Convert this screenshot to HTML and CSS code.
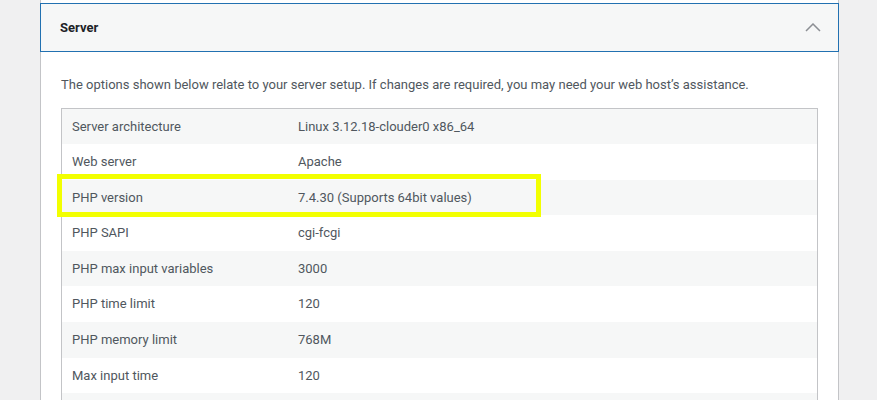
FILE: index.html
```html
<!DOCTYPE html>
<html lang="en">
<head>
<meta charset="utf-8">
<title>Site Health - Server</title>
<link rel="stylesheet" href="styles.css">
</head>
<body>
<div class="page">
  <section class="panel">
    <div class="panel-top"></div>
    <button class="accordion-trigger" type="button">
      <span class="title">Server</span>
      <svg class="chevron" width="16" height="9" viewBox="0 0 16 9" aria-hidden="true">
        <polyline points="1,8 8,1 15,8" fill="none" stroke="#8c8f94" stroke-width="1.5"/>
      </svg>
    </button>
    <div class="panel-body">
      <p class="desc">The options shown below relate to your server setup. If changes are required, you may need your web host’s assistance.</p>
      <div class="table-wrap">
        <table class="info">
          <tbody>
            <tr><td class="label">Server architecture</td><td>Linux 3.12.18-clouder0 x86_64</td></tr>
            <tr><td class="label">Web server</td><td>Apache</td></tr>
            <tr><td class="label">PHP version</td><td>7.4.30 (Supports 64bit values)</td></tr>
            <tr><td class="label">PHP SAPI</td><td>cgi-fcgi</td></tr>
            <tr><td class="label">PHP max input variables</td><td>3000</td></tr>
            <tr><td class="label">PHP time limit</td><td>120</td></tr>
            <tr><td class="label">PHP memory limit</td><td>768M</td></tr>
            <tr><td class="label">Max input time</td><td>120</td></tr>
            <tr class="empty"><td class="label"></td><td></td></tr>
          </tbody>
        </table>
        <div class="highlight"></div>
      </div>
    </div>
  </section>
</div>
</body>
</html>
```
FILE: styles.css
```css
html, body {
  margin: 0;
  padding: 0;
  background: #f0f0f1;
  font-family: Roboto, "Liberation Sans", sans-serif;
  font-size: 13px;
  color: #50575e;
  overflow: hidden;
  height: 400px;
}

.page {
  padding-left: 40px;
}

.panel {
  width: 797px;
  background: #fff;
  border-left: 1px solid #c3c4c7;
  border-right: 1px solid #c3c4c7;
  min-height: 400px;
}

.panel-top {
  height: 3px;
}

.accordion-trigger {
  display: flex;
  align-items: center;
  justify-content: space-between;
  width: calc(100% + 2px);
  margin: 0 -1px;
  height: 49px;
  padding: 0 17px 0 19px;
  box-sizing: border-box;
  background: #f6f7f7;
  border: 1px solid #2271b1;
  font-family: inherit;
  cursor: pointer;
}

.title {
  font-size: 13px;
  font-weight: 700;
  color: #1d2327;
}

.chevron {
  display: block;
  margin-top: -1px;
}

.panel-body {
  padding: 23px 20px 0 20px;
}

.desc {
  margin: 0 0 13px 0;
  line-height: 19.5px;
  color: #50575e;
}

.table-wrap {
  position: relative;
}

.info {
  width: 100%;
  border: 1px solid #c3c4c7;
  border-spacing: 0;
  table-layout: fixed;
}

.info td {
  padding: 8px 10px;
  line-height: 19.6px;
  height: 19.6px;
  color: #50575e;
  white-space: nowrap;
}

.info td.label {
  width: 226px;
  box-sizing: border-box;
}

.info tr:nth-child(odd) td {
  background: #f6f7f7;
}

.highlight {
  position: absolute;
  left: -4px;
  top: 66px;
  width: 484px;
  height: 43px;
  box-sizing: border-box;
  border: 5px solid #f2ff00;
  pointer-events: none;
}
```
